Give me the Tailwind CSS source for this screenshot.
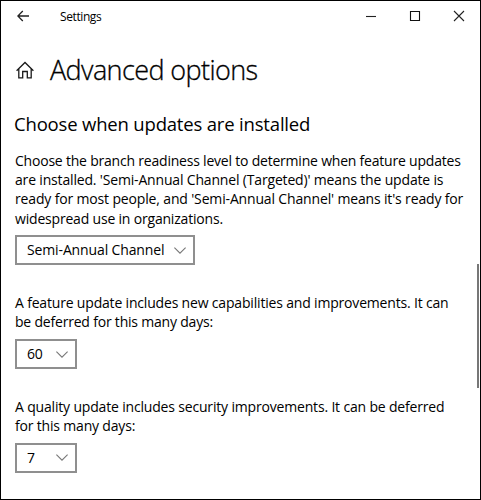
<!DOCTYPE html>
<html lang="en">
<head>
<meta charset="utf-8">
<title>Settings</title>
<script src="https://cdn.jsdelivr.net/npm/@tailwindcss/browser@4"></script>
</head>
<body class="bg-white font-['Open_Sans','Noto_Sans',sans-serif] text-black">
<div class="flex h-[500px] w-[481px] border border-black bg-white">
  <div class="flex min-w-0 flex-1 flex-col">
    <header class="flex h-[29px] shrink-0 items-center pl-4">
      <svg class="h-3 w-3" viewBox="0 0 12 12" fill="none" stroke="#222" stroke-width="1.3"><path d="M12 6H.8M5.8 1 .8 6l5 5"/></svg>
      <span class="mt-[2px] ml-[31px] text-[12px] tracking-[-0.4px]">Settings</span>
      <div class="ml-auto flex items-center gap-[32px] pr-[12px]">
        <svg class="h-3 w-3" viewBox="0 0 12 12" fill="none" stroke="#222" stroke-width="1.1"><path d="M1 6.5h10"/></svg>
        <svg class="h-3 w-3" viewBox="0 0 12 12" fill="none" stroke="#111" stroke-width="1.1"><path d="M1.5 1.5h9v9h-9z"/></svg>
        <svg class="h-3 w-3" viewBox="0 0 12 12" fill="none" stroke="#222" stroke-width="1.1"><path d="m1 1 10 10M11 1 1 11"/></svg>
      </div>
    </header>
    <div class="mt-5 flex h-10 shrink-0 items-center pl-[15px]">
      <svg class="h-[18px] w-[18px]" viewBox="0 0 18 18" fill="none" stroke="#1a1a1a" stroke-width="1.3"><path d="M.6 9.7 9 1.5l8.4 8.2M2.8 7.6v9.2h3.9v-6.3h4.6v6.3h3.9V7.6"/></svg>
      <h1 class="ml-4 text-[27px] leading-10 font-light tracking-[-0.6px] whitespace-nowrap [-webkit-text-stroke:0.3px_black]">Advanced options</h1>
    </div>
    <main class="pl-[14px] text-[14px] leading-[19.2px] whitespace-nowrap">
      <h2 class="mt-[21px] ml-[-1px] text-[18.5px] leading-[26px] tracking-[-0.18px]">Choose when updates are installed</h2>
      <p class="mt-[14px]">
        <span class="block tracking-[-0.21px]">Choose the branch readiness level to determine when feature updates</span>
        <span class="block tracking-[-0.17px]">are installed. 'Semi-Annual Channel (Targeted)' means the update is</span>
        <span class="block tracking-[-0.155px]">ready for most people, and 'Semi-Annual Channel' means it's ready for</span>
        <span class="block tracking-[-0.19px]">widespread use in organizations.</span>
      </p>
      <div class="mt-[7.2px] flex h-[30px] w-[180px] items-center justify-between border-2 border-[#8f8f8f] pr-[7px] pl-[10px]">
        <span class="tracking-[-0.13px]">Semi-Annual Channel</span>
        <svg class="h-[7px] w-3" viewBox="0 0 12 7" fill="none" stroke="#777" stroke-width="1.1"><path d="m.4.6 5.6 5.6L11.6.6"/></svg>
      </div>
      <p class="mt-[28px]">
        <span class="block tracking-[-0.18px]">A feature update includes new capabilities and improvements. It can</span>
        <span class="block tracking-[-0.2px]">be deferred for this many days:</span>
      </p>
      <div class="mt-[7.6px] flex h-[30px] w-[62px] items-center justify-between border-2 border-[#8f8f8f] pr-[7px] pl-[10px]">
        <span class="tracking-[-0.2px]">60</span>
        <svg class="h-[7px] w-3" viewBox="0 0 12 7" fill="none" stroke="#777" stroke-width="1.1"><path d="m.4.6 5.6 5.6L11.6.6"/></svg>
      </div>
      <p class="mt-[28px]">
        <span class="block tracking-[-0.175px]">A quality update includes security improvements. It can be deferred</span>
        <span class="block tracking-[-0.18px]">for this many days:</span>
      </p>
      <div class="mt-[7.2px] flex h-[30px] w-[62px] items-center justify-between border-2 border-[#8f8f8f] pr-[7px] pl-[10px]">
        <span>7</span>
        <svg class="h-[7px] w-3" viewBox="0 0 12 7" fill="none" stroke="#777" stroke-width="1.1"><path d="m.4.6 5.6 5.6L11.6.6"/></svg>
      </div>
    </main>
  </div>
  <div class="mt-[263px] mr-px h-[124px] w-[2px] bg-[#777]"></div>
</div>
</body>
</html>
